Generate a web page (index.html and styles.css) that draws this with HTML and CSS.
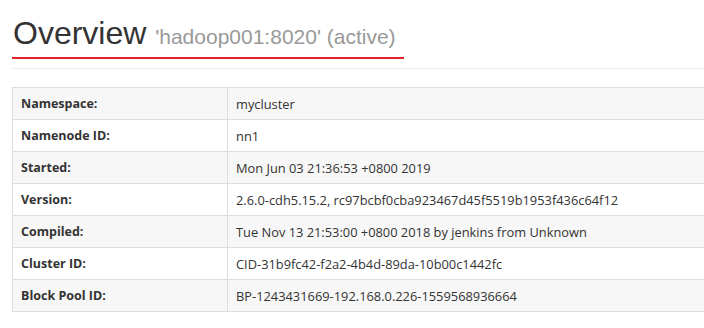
FILE: index.html
```
<!DOCTYPE html>
<html>
<head>
<meta charset="utf-8">
<link rel="stylesheet" href="styles.css">
</head>
<body>
<div class="wrap">
  <div class="page-header">
    <h1 class="title">Overview <small class="sub">'hadoop001:8020' (active)</small></h1>
  </div>
  <table class="info">
    <tr class="odd"><th>Namespace:</th><td>mycluster</td></tr>
    <tr><th>Namenode ID:</th><td>nn1</td></tr>
    <tr class="odd"><th>Started:</th><td>Mon Jun 03 21:36:53 +0800 2019</td></tr>
    <tr><th>Version:</th><td>2.6.0-cdh5.15.2, rc97bcbf0cba923467d45f5519b1953f436c64f12</td></tr>
    <tr class="odd"><th>Compiled:</th><td>Tue Nov 13 21:53:00 +0800 2018 by jenkins from Unknown</td></tr>
    <tr><th>Cluster ID:</th><td>CID-31b9fc42-f2a2-4b4d-89da-10b00c1442fc</td></tr>
    <tr class="odd"><th>Block Pool ID:</th><td>BP-1243431669-192.168.0.226-1559568936664</td></tr>
  </table>
</div>
</body>
</html>
```
FILE: styles.css
```
html, body {
  margin: 0;
  padding: 0;
  background: #fff;
  overflow: hidden;
}
.wrap {
  width: 760px;
  padding-left: 12px;
}
.page-header {
  border-bottom: 1px solid #eeeeee;
  padding-bottom: 9px;
}
.title {
  display: inline-block;
  margin: 16px 0 0 0;
  padding: 0 8px 6px 1px;
  border-bottom: 2px solid #e3212b;
  font-family: "Liberation Sans", Arial, sans-serif;
  font-weight: normal;
  font-size: 32px;
  line-height: 1.1;
  color: #333333;
}
.sub {
  font-size: 21px;
  color: #999999;
}
.info {
  margin-top: 18px;
  width: 100%;
  border-collapse: collapse;
  font-family: "Open Sans", sans-serif;
  font-size: 12.85px;
  color: #333333;
}
.info th, .info td {
  border: 1px solid #dddddd;
  height: 32px;
  padding: 0 8px;
  box-sizing: border-box;
  text-align: left;
  line-height: 20px;
}
.info th {
  width: 215px;
  font-weight: bold;
  font-size: 12.5px;
}
.info tr.odd {
  background: #f7f7f7;
}
```
